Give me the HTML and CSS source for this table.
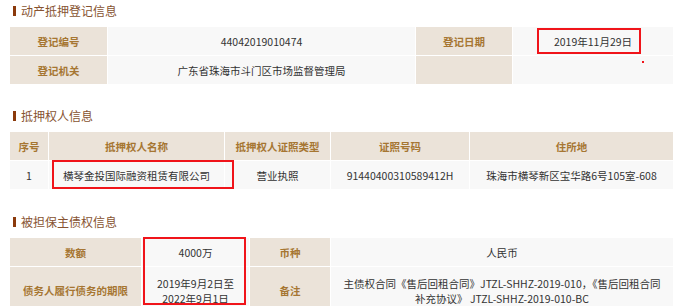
FILE: index.html
```html
<!DOCTYPE html>
<html lang="zh-CN">
<head>
<meta charset="utf-8">
<title>动产抵押登记信息</title>
<link rel="stylesheet" href="styles.css">
</head>
<body>
<div class="page">
  <section class="section">
    <h2 class="title">动产抵押登记信息</h2>
    <table class="grid">
      <colgroup><col style="width:98px"><col style="width:308px"><col style="width:97px"><col style="width:160px"></colgroup>
      <tr><th>登记编号</th><td>44042019010474</td><th>登记日期</th><td>2019年11月29日</td></tr>
      <tr><th>登记机关</th><td>广东省珠海市斗门区市场监督管理局</td><th></th><td></td></tr>
    </table>
  </section>
  <section class="section">
    <h2 class="title">抵押权人信息</h2>
    <table class="grid">
      <colgroup><col style="width:39px"><col style="width:176px"><col style="width:106px"><col style="width:139px"><col style="width:203px"></colgroup>
      <tr><th>序号</th><th>抵押权人名称</th><th>抵押权人证照类型</th><th>证照号码</th><th>住所地</th></tr>
      <tr><td>1</td><td>横琴金投国际融资租赁有限公司</td><td>营业执照</td><td>91440400310589412H</td><td>珠海市横琴新区宝华路6号105室-608</td></tr>
    </table>
  </section>
  <section class="section">
    <h2 class="title">被担保主债权信息</h2>
    <table class="grid">
      <colgroup><col style="width:132px"><col style="width:108px"><col style="width:81px"><col style="width:342px"></colgroup>
      <tr><th>数额</th><td>4000万</td><th>币种</th><td>人民币</td></tr>
      <tr class="tall"><th>债务人履行债务的期限</th><td>2019年9月2日至<br>2022年9月1日</td><th>备注</th><td>主债权合同《售后回租合同》JTZL-SHHZ-2019-010，《售后回租合同<br>补充协议》 JTZL-SHHZ-2019-010-BC</td></tr>
    </table>
  </section>
  <div class="mark mark-date"></div>
  <div class="mark mark-name"></div>
  <div class="mark mark-amount"></div>
  <div class="dot"></div>
</div>
</body>
</html>
```
FILE: styles.css
```css
html, body {
  margin: 0;
  padding: 0;
  background: #fff;
}
body {
  font-family: "Noto Sans CJK SC", "Noto Sans", sans-serif;
  color: #333;
  overflow: hidden;
}
.page {
  position: relative;
  padding-left: 10px;
}
.section {
  margin-bottom: 20px;
}
.section + .section + .section {
  margin-top: 21px;
}
.title {
  display: flex;
  align-items: center;
  height: 21px;
  margin: 0 0 6px 3px;
  font-size: 12px;
  font-weight: normal;
  color: #875331;
  line-height: 21px;
}
.title::before {
  content: "";
  width: 3px;
  height: 10px;
  margin-right: 5px;
  background: #8b3a0c;
}
.grid {
  width: 663px;
  table-layout: fixed;
  border-collapse: separate;
  border-spacing: 0;
  font-size: 10.5px;
}
.grid th, .grid td {
  height: 29px;
  padding: 0 4px;
  text-align: center;
  vertical-align: middle;
  border-right: 1px solid #fff;
  border-bottom: 1px solid #fff;
  line-height: 15px;
  box-sizing: border-box;
}
.grid tr > *:last-child {
  border-right: 0;
}
.grid th {
  background: #ebe3d9;
  color: #a67632;
  font-weight: bold;
}
.grid td {
  background: #f8f8f8;
  color: #333;
}
.grid .tall th, .grid .tall td {
  height: 48px;
  padding-top: 8px;
  padding-bottom: 8px;
}
.mark {
  position: absolute;
  border: 2px solid #f0141a;
  box-sizing: border-box;
}
.mark-date { left: 537px; top: 28px; width: 104px; height: 26px; }
.mark-name { left: 52px; top: 160px; width: 182px; height: 29px; }
.mark-amount { left: 143px; top: 237px; width: 103px; height: 68px; }
.dot {
  position: absolute;
  left: 642px;
  top: 61px;
  width: 2px;
  height: 2px;
  background: #f0141a;
}
```
